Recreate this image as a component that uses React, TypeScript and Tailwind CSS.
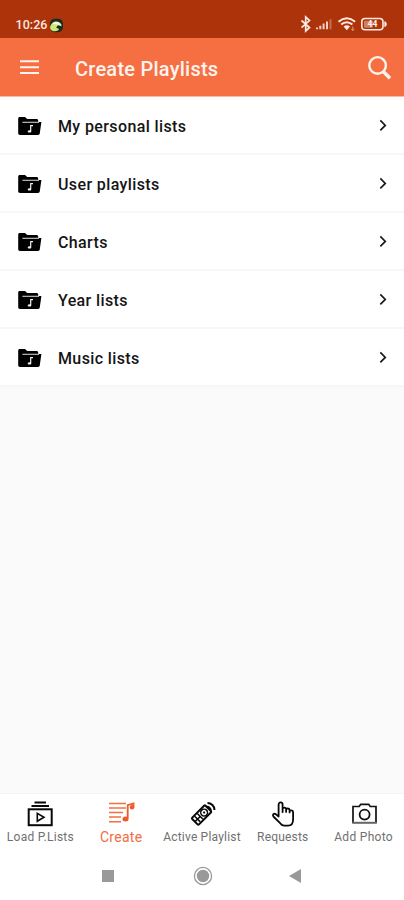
import React from "react";

const lists = ["My personal lists", "User playlists", "Charts", "Year lists", "Music lists"];

function FolderIcon() {
  return (
    <svg width="24" height="20" viewBox="0 0 24 20" className="mt-px shrink-0">
      <path d="M1.800 1H7l2.200 2h9.300c1 0 1.700.7 1.700 1.700V6H23.400l-1.600 11.300c-.2 1-.8 1.600-1.800 1.600H2c-1.100 0-1.800-.7-1.800-1.700V2.600C.2 1.600.8 1 1.800 1z" fill="#000" />
      <path d="M4.400 6.300H21" stroke="#ccc" strokeWidth="1.100" fill="none" />
      <path d="M15 9.600h-2.300v5.500" stroke="#f2f2f2" strokeWidth="1.200" fill="none" />
      <ellipse cx="11.500" cy="15.400" rx="1.700" ry="1.200" fill="#f2f2f2" />
    </svg>
  );
}

function StatusIcons() {
  return (
    <svg width="88" height="18" viewBox="0 0 88 18" fill="none">
      <path d="M1.500 5.500 9.500 12.500 5.700 16V2l3.800 3.600-8 7" stroke="#fce9e1" strokeWidth="1.700" />
      <path d="M17 14.200v-1.700M20.300 14.200v-3.400M23.600 14.200V8.600M27 14.200V6.600" stroke="#f2cfc0" strokeWidth="2" />
      <path d="M30.500 14.200V4.200" stroke="#c9704a" strokeWidth="2" />
      <path d="M38.500 6.700Q46.800 -.2 55.100 6.700M41.200 9.600Q46.800 4.900 52.400 9.600" stroke="#fce9e1" strokeWidth="2" />
      <path d="M43.600 11.600Q46.800 9 50 11.600L46.800 15.200z" fill="#fce9e1" />
      <path d="M52.800 11.500v4M51.200 13.800l1.600 1.700 1.600-1.700" stroke="#dd9b80" strokeWidth="1" />
      <rect x="61.800" y="3.500" width="21.200" height="11.200" rx="3.300" stroke="#fce9e1" strokeWidth="1.600" />
      <rect x="64" y="5.700" width="9" height="7" rx="1" fill="#cf805f" />
      <path d="M84.300 6.200c3.300.5 3.300 5.300 0 5.800z" fill="#fce9e1" />
      <text x="72.400" y="12.300" textAnchor="middle" fontFamily="Roboto, sans-serif" fontWeight="700" fontSize="8.500" fill="#fff1ea">44</text>
    </svg>
  );
}

function StatusBar() {
  return (
    <div className="flex h-[38px] items-start justify-between bg-[#ad330a] pt-[15px] pr-4 pl-[15.5px]">
      <div className="flex items-center">
        <span className="w-[33.5px] text-[12.5px] leading-5 font-medium tracking-[0.05px] text-[#fbe8e0]">10:26</span>
        <svg width="15" height="15" viewBox="0 0 15 15">
          <rect x="1" y=".8" width="13" height="13.400" rx="5" fill="#1c2b22" />
          <path d="M1 9.500C2 5 5 3.300 8 3.600c2.700.2 4.300 2 4.700 4.600L8.800 7.300 7.200 9.700l3 1.300c-1 2-4 2.700-6.400 1.900C2 12.300 1 11 1 9.500z" fill="#cbe879" />
          <path d="M3 6Q7.500 1.500 12.500 7L8.500 6.500z" fill="#f5f7ef" />
        </svg>
      </div>
      <StatusIcons />
    </div>
  );
}

function AppBar() {
  return (
    <header className="flex h-[59px] items-center border-b border-[#fbb8a2] bg-[#f56f43] pr-3 pl-5 text-[#fff3ee]">
      <svg width="19" height="16" viewBox="0 0 19 16" className="mr-9 shrink-0">
        <path d="M0 2.300h19M0 8.200h19M0 14h19" stroke="currentColor" strokeWidth="2" />
      </svg>
      <h1 className="flex-1 pt-[3px] text-[20px] leading-6 font-medium tracking-[0.24px]">Create Playlists</h1>
      <svg width="25" height="25" viewBox="0 0 25 25" fill="none">
        <circle cx="10.600" cy="10.400" r="8.300" stroke="currentColor" strokeWidth="2.400" />
        <path d="m16 16.200 7 7" stroke="currentColor" strokeWidth="3.500" />
      </svg>
    </header>
  );
}

function LoadIcon() {
  return (
    <svg width="28" height="28" viewBox="0 0 28 28" fill="none" stroke="#080808">
      <path d="M8.500 1.500h11.500M5.500 5h17.500" strokeWidth="1.900" />
      <rect x="2.700" y="8.300" width="23" height="15.900" strokeWidth="2" />
      <path d="M11.300 12.300v8l6.700-4z" strokeWidth="1.600" />
    </svg>
  );
}

function CreateIcon() {
  return (
    <svg width="28" height="28" viewBox="0 0 28 28" fill="none" stroke="#f46d43">
      <path d="M2 2.500h17M2 7h17M2 11.600h14M2 16.100h12M2 20.700h12" strokeWidth="1.500" />
      <path d="M20.700 17.500V4.200L26.500 2.500v4" stroke="#ef5a2a" strokeWidth="1.800" />
      <ellipse cx="18.500" cy="18" rx="3" ry="2.500" fill="#ef5a2a" stroke="none" />
      <circle cx="25" cy="6.200" r="2.200" fill="#ef5a2a" stroke="none" />
    </svg>
  );
}

function RemoteIcon() {
  return (
    <svg width="28" height="28" viewBox="0 0 28 28" fill="none" stroke="#080808">
      <g transform="translate(1 -.5) rotate(45 11.500 15.500)">
        <rect x="6.800" y="4.700" width="9.600" height="18.800" rx="1" strokeWidth="2" />
        <circle cx="11.600" cy="10.500" r="3.400" strokeWidth="1.500" />
        <circle cx="11.600" cy="10.500" r="1.100" fill="#080808" stroke="none" />
        <path d="M7.500 16h8M7.500 19.800h8M11.600 16v7" strokeWidth="1.500" />
      </g>
      <path d="M18.500 5.700a4 4 0 0 1 4.300 4.300M19.500 2a7 7 0 0 1 7 7" strokeWidth="2" />
    </svg>
  );
}

function HandIcon() {
  return (
    <svg width="28" height="28" viewBox="0 0 28 28" fill="none" stroke="#080808" strokeWidth="1.800" strokeLinejoin="round" strokeLinecap="round">
      <path d="M9.600 15.500V3.700c0-3 4-3 4 0v7.300M13.600 10V8c0-1.900 3.500-1.900 3.500.2v2.700M17.100 10V8.800c0-1.900 3.500-1.700 3.500.4v2.200M20.600 10.800c0-2.200 3.500-1.800 3.500.4v7c0 3.800-1.600 6.400-5 6.400h-3.700c-1.800 0-3-.7-4-2.200l-7-6.900c-1.300-1.800.6-3.500 2.300-2.400l2.900 2.400" />
    </svg>
  );
}

function CameraIcon() {
  return (
    <svg width="28" height="28" viewBox="0 0 28 28" fill="none" stroke="#111">
      <path d="M3 22V5.500h6.200l1.500-2.200h8l1.500 2.200H26V22" strokeWidth="1.700" />
      <path d="M2.200 21.800h24.600" stroke="#666" strokeWidth="2" />
      <circle cx="14.600" cy="13.600" r="5" strokeWidth="1.800" />
    </svg>
  );
}

const tabs = [
  { label: "Load P.Lists", Icon: LoadIcon, style: "text-[12px] tracking-[0.25px] text-[#707070]" },
  { label: "Create", Icon: CreateIcon, style: "text-[14px] tracking-[0.3px] text-[#f36d42]" },
  { label: "Active Playlist", Icon: RemoteIcon, style: "text-[12px] tracking-[0.2px] text-[#707070]" },
  { label: "Requests", Icon: HandIcon, style: "text-[12px] tracking-[0.2px] text-[#707070]" },
  { label: "Add Photo", Icon: CameraIcon, style: "text-[12px] tracking-[0.3px] text-[#707070]" },
];

export default function App() {
  return (
    <div className="flex h-[900px] w-[404px] flex-col overflow-hidden bg-[#fafafa] font-['Roboto',sans-serif]">
      <StatusBar />
      <AppBar />
      <main className="flex-1">
        {lists.map((label) => (
          <button key={label} className="flex h-[58px] w-full items-center border-b-2 border-[#f7f7f7] bg-white pr-[15px] pl-[18px] text-left">
            <FolderIcon />
            <span className="ml-4 flex-1 pt-[3px] text-[16px] leading-5 font-medium tracking-[0.38px] text-[#151515]">{label}</span>
            <svg width="12" height="14" viewBox="0 0 12 14" className="shrink-0">
              <path d="m3.300 2.400 5 5-5 5" fill="none" stroke="#1b1b1b" strokeWidth="1.700" />
            </svg>
          </button>
        ))}
      </main>
      <nav className="grid h-[59px] grid-cols-5 border-t border-[#f3f3f3] bg-white pt-[7px]">
        {tabs.map(({ label, Icon, style }) => (
          <button key={label} className="flex flex-col items-center">
            <Icon />
            <span className={"leading-4 whitespace-nowrap " + style}>{label}</span>
          </button>
        ))}
      </nav>
      <div className="flex h-12 items-center bg-white pl-[102px]">
        <span className="size-3 bg-[#999999]" />
        <svg width="20" height="20" viewBox="0 0 20 20" className="ml-[79px]">
          <circle cx="10" cy="10" r="8.600" fill="none" stroke="#999" strokeWidth="1.300" />
          <circle cx="10" cy="10" r="6.200" fill="#999" />
        </svg>
        <svg width="12" height="14" viewBox="0 0 12 14" className="ml-[76px]">
          <path d="M12 0v14L0 7z" fill="#999" />
        </svg>
      </div>
    </div>
  );
}
